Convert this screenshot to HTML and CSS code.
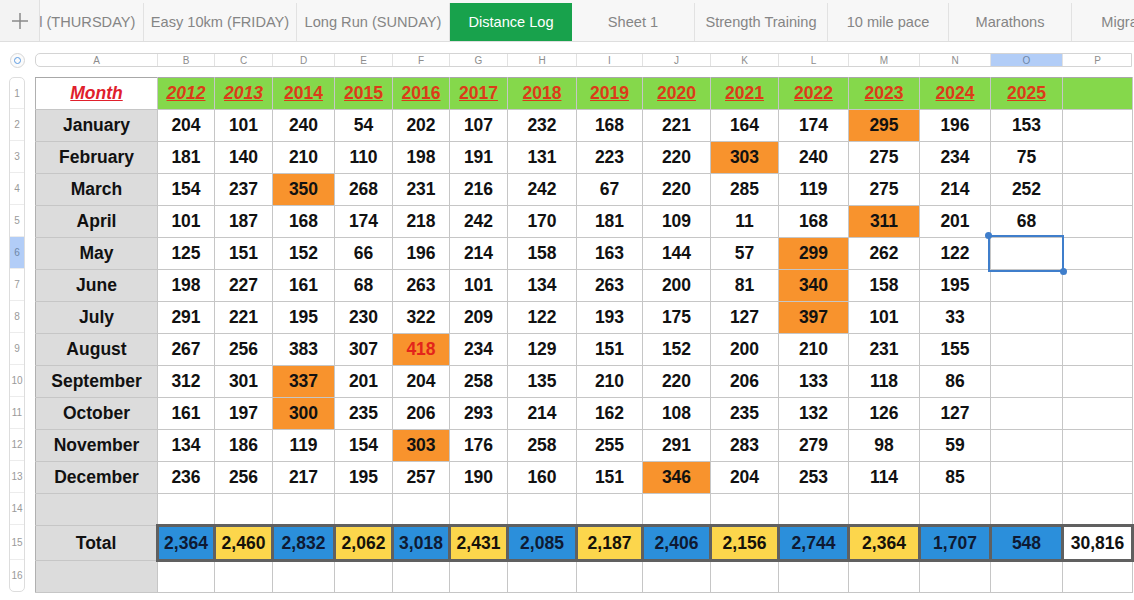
FILE: index.html
```html
<!DOCTYPE html>
<html>
<head>
<meta charset="utf-8">
<link rel="stylesheet" href="styles.css">
</head>
<body>
<div class="tabbar">
  <div class="addtab"><svg width="18" height="18" viewBox="0 0 18 18"><path d="M9 1v16M1 9h16" stroke="#8a8a8a" stroke-width="1.5" fill="none"/></svg></div>
  <div class="tabs">
    <div class="strip">
      <div class="tab t-first">Interval (THURSDAY)</div>
      <div class="tab t-153">Easy 10km (FRIDAY)</div>
      <div class="tab t-153">Long Run (SUNDAY)</div>
      <div class="tab active">Distance Log</div>
      <div class="tab t-123">Sheet 1</div>
      <div class="tab t-133">Strength Training</div>
      <div class="tab t-121">10 mile pace</div>
      <div class="tab t-123">Marathons</div>
      <div class="tab t-123">Migraines</div>
    </div>
  </div>
</div>

<div class="sheet">
  <div class="corner"><span class="ring"><span class="dot"></span></span></div>
  <div class="letters">
    <span>A</span><span>B</span><span>C</span><span>D</span><span>E</span><span>F</span><span>G</span><span>H</span><span>I</span><span>J</span><span>K</span><span>L</span><span>M</span><span>N</span><span class="cur">O</span><span>P</span>
  </div>
  <div class="rownums">
    <span>1</span><span>2</span><span>3</span><span>4</span><span>5</span><span class="cur">6</span><span>7</span><span>8</span><span>9</span><span>10</span><span>11</span><span>12</span><span>13</span><span>14</span><span class="tall">15</span><span>16</span>
  </div>
  <table class="grid">
    <colgroup>
      <col class="w122"><col class="w57"><col class="w58"><col class="w62"><col class="w58"><col class="w57"><col class="w58"><col class="w69"><col class="w66"><col class="w68"><col class="w68"><col class="w70"><col class="w71"><col class="w71"><col class="w72"><col class="w70">
    </colgroup>
    <tr class="head">
      <td class="month-h">Month</td>
      <td class="yr it">2012</td><td class="yr it">2013</td><td class="yr">2014</td><td class="yr">2015</td><td class="yr">2016</td><td class="yr">2017</td><td class="yr">2018</td><td class="yr">2019</td><td class="yr">2020</td><td class="yr">2021</td><td class="yr">2022</td><td class="yr">2023</td><td class="yr">2024</td><td class="yr">2025</td><td class="yr"></td>
    </tr>
    <tr>
      <td class="m">January</td><td>204</td><td>101</td><td>240</td><td>54</td><td>202</td><td>107</td><td>232</td><td>168</td><td>221</td><td>164</td><td>174</td><td class="o">295</td><td>196</td><td>153</td><td></td>
    </tr>
    <tr>
      <td class="m">February</td><td>181</td><td>140</td><td>210</td><td>110</td><td>198</td><td>191</td><td>131</td><td>223</td><td>220</td><td class="o">303</td><td>240</td><td>275</td><td>234</td><td>75</td><td></td>
    </tr>
    <tr>
      <td class="m">March</td><td>154</td><td>237</td><td class="o">350</td><td>268</td><td>231</td><td>216</td><td>242</td><td>67</td><td>220</td><td>285</td><td>119</td><td>275</td><td>214</td><td>252</td><td></td>
    </tr>
    <tr>
      <td class="m">April</td><td>101</td><td>187</td><td>168</td><td>174</td><td>218</td><td>242</td><td>170</td><td>181</td><td>109</td><td>11</td><td>168</td><td class="o">311</td><td>201</td><td>68</td><td></td>
    </tr>
    <tr>
      <td class="m">May</td><td>125</td><td>151</td><td>152</td><td>66</td><td>196</td><td>214</td><td>158</td><td>163</td><td>144</td><td>57</td><td class="o">299</td><td>262</td><td>122</td><td class="sel"><div class="selbox"><span class="handle tl"></span><span class="handle br"></span></div></td><td></td>
    </tr>
    <tr>
      <td class="m">June</td><td>198</td><td>227</td><td>161</td><td>68</td><td>263</td><td>101</td><td>134</td><td>263</td><td>200</td><td>81</td><td class="o">340</td><td>158</td><td>195</td><td></td><td></td>
    </tr>
    <tr>
      <td class="m">July</td><td>291</td><td>221</td><td>195</td><td>230</td><td>322</td><td>209</td><td>122</td><td>193</td><td>175</td><td>127</td><td class="o">397</td><td>101</td><td>33</td><td></td><td></td>
    </tr>
    <tr>
      <td class="m">August</td><td>267</td><td>256</td><td>383</td><td>307</td><td class="o red">418</td><td>234</td><td>129</td><td>151</td><td>152</td><td>200</td><td>210</td><td>231</td><td>155</td><td></td><td></td>
    </tr>
    <tr>
      <td class="m">September</td><td>312</td><td>301</td><td class="o">337</td><td>201</td><td>204</td><td>258</td><td>135</td><td>210</td><td>220</td><td>206</td><td>133</td><td>118</td><td>86</td><td></td><td></td>
    </tr>
    <tr>
      <td class="m">October</td><td>161</td><td>197</td><td class="o">300</td><td>235</td><td>206</td><td>293</td><td>214</td><td>162</td><td>108</td><td>235</td><td>132</td><td>126</td><td>127</td><td></td><td></td>
    </tr>
    <tr>
      <td class="m">November</td><td>134</td><td>186</td><td>119</td><td>154</td><td class="o">303</td><td>176</td><td>258</td><td>255</td><td>291</td><td>283</td><td>279</td><td>98</td><td>59</td><td></td><td></td>
    </tr>
    <tr>
      <td class="m">December</td><td>236</td><td>256</td><td>217</td><td>195</td><td>257</td><td>190</td><td>160</td><td>151</td><td class="o">346</td><td>204</td><td>253</td><td>114</td><td>85</td><td></td><td></td>
    </tr>
    <tr>
      <td class="m"></td><td></td><td></td><td></td><td></td><td></td><td></td><td></td><td></td><td></td><td></td><td></td><td></td><td></td><td></td><td></td>
    </tr>
    <tr class="total">
      <td class="m">Total</td><td class="tb">2,364</td><td class="ty">2,460</td><td class="tb">2,832</td><td class="ty">2,062</td><td class="tb">3,018</td><td class="ty">2,431</td><td class="tb">2,085</td><td class="ty">2,187</td><td class="tb">2,406</td><td class="ty">2,156</td><td class="tb">2,744</td><td class="ty">2,364</td><td class="tb">1,707</td><td class="tb">548</td><td class="tw">30,816</td>
    </tr>
    <tr>
      <td class="m"></td><td></td><td></td><td></td><td></td><td></td><td></td><td></td><td></td><td></td><td></td><td></td><td></td><td></td><td></td><td></td>
    </tr>
  </table>
</div>
</body>
</html>
```

FILE: styles.css
```css
html, body {
  margin: 0;
  padding: 0;
  background: #ffffff;
  font-family: "Liberation Sans", Arial, sans-serif;
  overflow: hidden;
}

/* ---------- sheet tabs ---------- */
.tabbar {
  display: flex;
  height: 38px;
  padding-top: 3px;
  background: #f7f7f7;
  border-bottom: 1px solid #dedede;
}
.addtab {
  flex: none;
  width: 39px;
  margin-top: -3px;
  height: 41px;
  border-right: 1px solid #e0e0e0;
  display: flex;
  align-items: center;
  justify-content: center;
  background: #f3f3f3;
}
.tabs {
  flex: 1;
  overflow: hidden;
}
.strip {
  display: flex;
  margin-left: -53px;
  height: 38px;
}
.tab {
  flex: none;
  box-sizing: border-box;
  width: 122px;
  height: 38px;
  display: flex;
  align-items: center;
  justify-content: center;
  white-space: nowrap;
  font-size: 14.6px;
  color: #858585;
  border-right: 1px solid #e2e2e2;
}
.t-first { width: 157px; }
.t-153 { width: 153px; }
.t-123 { width: 123px; }
.t-133 { width: 133px; }
.t-121 { width: 121px; }
.tab.active {
  background: #18a24c;
  color: #ffffff;
  border-right: none;
}

/* ---------- sheet ---------- */
.sheet {
  display: grid;
  grid-template-columns: 35px 1097px;
  grid-template-rows: 14px auto;
  row-gap: 10px;
  margin-top: 11px;
}
.corner {
  display: flex;
  align-items: center;
  justify-content: center;
  padding-right: 1px;
}
.ring {
  box-sizing: border-box;
  width: 15px;
  height: 15px;
  border-radius: 50%;
  border: 1px solid #d6d6d6;
  background: #fbfbfb;
  display: flex;
  align-items: center;
  justify-content: center;
}
.dot {
  box-sizing: border-box;
  width: 7px;
  height: 7px;
  border-radius: 50%;
  border: 1.5px solid #5c9be2;
}
.letters {
  box-sizing: border-box;
  display: grid;
  grid-template-columns: 122px 57px 58px 62px 58px 57px 58px 69px 66px 68px 68px 70px 71px 71px 72px 70px;
  height: 14px;
  border: 1px solid #d4d4d4;
  border-radius: 5px 0 0 5px;
  overflow: hidden;
}
.letters span {
  font-size: 10px;
  color: #8d8d8d;
  display: flex;
  align-items: center;
  justify-content: center;
  border-right: 1px solid #e2e2e2;
}
.letters span.cur { background: #b2cdf7; color: #6f87a8; }

.rownums {
  box-sizing: border-box;
  margin-left: 9px;
  width: 16px;
  display: flex;
  flex-direction: column;
  border: 1px solid #dddddd;
  border-radius: 5px;
  overflow: hidden;
  height: 515px;
}
.rownums span {
  flex: none;
  height: 32px;
  display: flex;
  align-items: center;
  justify-content: center;
  font-size: 10px;
  color: #9a9a9a;
  border-bottom: 1px solid #ececec;
  box-sizing: border-box;
}
.rownums span.tall { height: 35px; }
.rownums span:first-child { height: 31px; }
.rownums span.cur { background: #b2cdf7; color: #6f87a8; }

/* ---------- table ---------- */
.grid {
  border-collapse: collapse;
  table-layout: fixed;
  width: 1097px;
  font-weight: bold;
  font-size: 17.5px;
  color: #111111;
}
.w122 { width: 122px; }
.w57 { width: 57px; }
.w58 { width: 58px; }
.w62 { width: 62px; }
.w66 { width: 66px; }
.w68 { width: 68px; }
.w69 { width: 69px; }
.w70 { width: 70px; }
.w71 { width: 71px; }
.w72 { width: 72px; }

.grid tr { height: 32px; }
.grid td {
  border: 1px solid #c6c6c6;
  padding: 0;
  text-align: center;
  vertical-align: middle;
  white-space: nowrap;
  overflow: visible;
}
.grid tr.head td {
  border-top: 1px solid #a8a8a8;
}
.grid tr td:first-child {
  border-left: 1px solid #b0b0b0;
}
.month-h {
  background: #ffffff;
  color: #e0202c;
  font-style: italic;
  text-decoration: underline;
}
.yr {
  background: #85d84b;
  color: #dc3b19;
  text-decoration: underline;
}
.yr.it { font-style: italic; }
.m { background: #dcdcdc; }
.o { background: #f8932d; }
.red { color: #e3241b; }

.sel { position: relative; }
.selbox {
  position: absolute;
  left: -3px;
  top: -3px;
  right: -2px;
  bottom: -3px;
  border: 2px solid #3f7ecb;
}
.handle {
  position: absolute;
  width: 7px;
  height: 7px;
  border-radius: 50%;
  background: #3f7ecb;
}
.handle.tl { left: -5px; top: -5px; }
.handle.br { right: -5px; bottom: -5px; }

.grid tr.total { height: 35px; }
.grid tr.total td.tb,
.grid tr.total td.ty,
.grid tr.total td.tw {
  border: 3px solid #606060;
}
.tb { background: #2b8fdb; color: #0e1a33; }
.ty { background: #fcd64c; color: #15120a; }
.tw { background: #ffffff; }
```
